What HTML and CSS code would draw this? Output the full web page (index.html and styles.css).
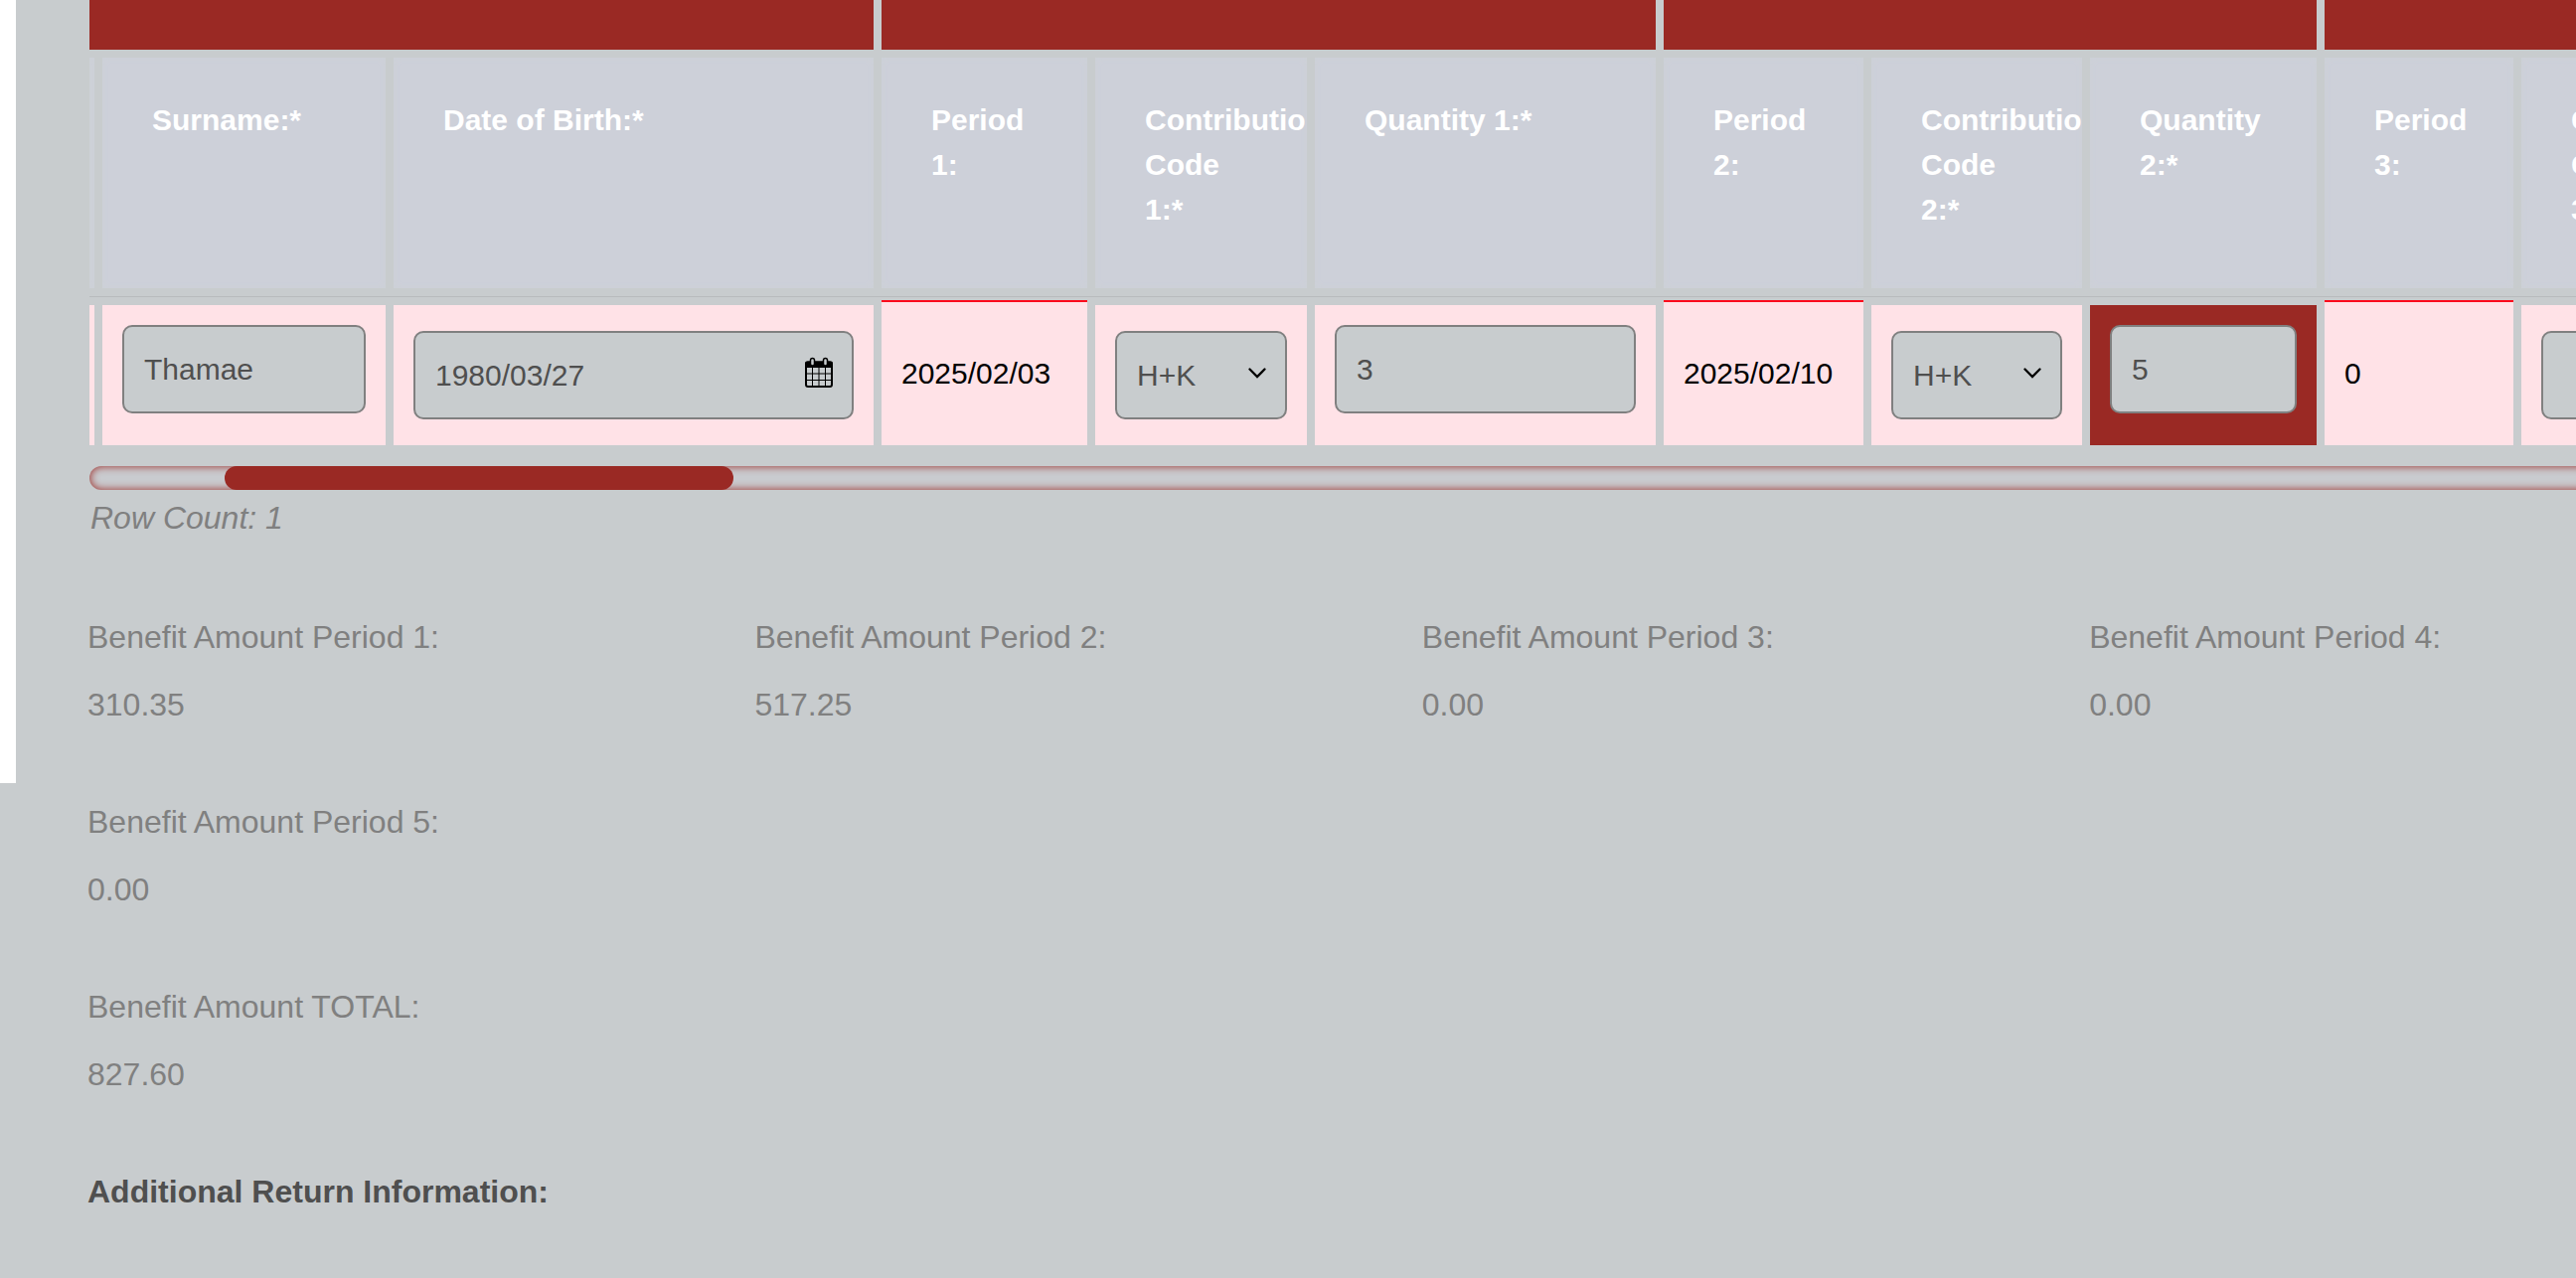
FILE: index.html
```html
<!DOCTYPE html>
<html lang="en">
<head>
<meta charset="utf-8">
<title>Return Details</title>
<link rel="stylesheet" href="styles.css">
</head>
<body>
<main class="page">
  <aside class="gutter"></aside>
  <div class="content">
    <section class="grid-scroll">
      <div class="groups">
        <div class="group"></div><div class="group"></div><div class="group"></div><div class="group"></div>
      </div>
      <div class="cols heads">
        <div class="head"></div>
        <div class="head">Surname:*</div>
        <div class="head">Date of Birth:*</div>
        <div class="head">Period<br>1:</div>
        <div class="head">Contribution<br>Code<br>1:*</div>
        <div class="head">Quantity 1:*</div>
        <div class="head">Period<br>2:</div>
        <div class="head">Contribution<br>Code<br>2:*</div>
        <div class="head">Quantity<br>2:*</div>
        <div class="head">Period<br>3:</div>
        <div class="head">Contribution<br>Code<br>3:*</div>
      </div>
      <div class="rule"></div>
      <div class="cols row">
        <div class="cell"></div>
        <div class="cell"><div class="field">Thamae</div></div>
        <div class="cell low"><div class="field">1980/03/27
          <svg class="calendar" viewBox="0 0 30 32">
            <rect x="2" y="5.5" width="26" height="24.5" rx="2" fill="none" stroke="#000" stroke-width="2"/>
            <path d="M1 11V6.500Q1 4.500 3 4.500H27Q29 4.500 29 6.500V11Z"/>
            <path d="M8.500 10V30M15 10V30M21.500 10V30M2 17H28M2 23.500H28" fill="none" stroke="#000" stroke-width="1"/>
            <rect x="6.500" y="1.500" width="4" height="7.500" rx="2" fill="#c8ccce" stroke="#000" stroke-width="1.500"/>
            <rect x="19.500" y="1.500" width="4" height="7.500" rx="2" fill="#c8ccce" stroke="#000" stroke-width="1.500"/>
          </svg></div></div>
        <div class="cell plain">2025/02/03</div>
        <div class="cell low"><div class="field">H+K<svg class="chevron" viewBox="0 0 18 12"><path d="M1.500 1.500L9 9L16.500 1.500"/></svg></div></div>
        <div class="cell"><div class="field">3</div></div>
        <div class="cell plain">2025/02/10</div>
        <div class="cell low"><div class="field">H+K<svg class="chevron" viewBox="0 0 18 12"><path d="M1.500 1.500L9 9L16.500 1.500"/></svg></div></div>
        <div class="cell alert"><div class="field">5</div></div>
        <div class="cell plain">0</div>
        <div class="cell low"><div class="field"></div></div>
      </div>
      <div class="track"><div class="thumb"></div></div>
    </section>
    <p class="count">Row Count: 1</p>
    <dl class="totals">
      <div><dt>Benefit Amount Period 1:</dt><dd>310.35</dd></div>
      <div><dt>Benefit Amount Period 2:</dt><dd>517.25</dd></div>
      <div><dt>Benefit Amount Period 3:</dt><dd>0.00</dd></div>
      <div><dt>Benefit Amount Period 4:</dt><dd>0.00</dd></div>
      <div class="first"><dt>Benefit Amount Period 5:</dt><dd>0.00</dd></div>
      <div class="first"><dt>Benefit Amount TOTAL:</dt><dd>827.60</dd></div>
    </dl>
    <h2 class="more">Additional Return Information:</h2>
  </div>
</main>
</body>
</html>
```

FILE: styles.css
```css
* { box-sizing: border-box; }
body {
  margin: 0;
  height: 1286px;
  overflow: hidden;
  background: #c8ccce;
  color: #808080;
  font: 32px/48px "Liberation Sans", Arial, sans-serif;
}
.page { display: flex; }
.gutter { flex: none; width: 16px; height: 788px; background: #fff; }
.content { flex: 1; min-width: 0; padding-left: 72px; overflow: hidden; }

/* Horizontally scrolled member grid */
.grid-scroll { margin-left: 2px; overflow: hidden; font-size: 30px; line-height: 45px; }
.groups {
  display: grid;
  grid-template-columns: 789px 779px 657px 1fr;
  column-gap: 8px;
  height: 50px;
}
.group { background: #9a2924; }
.cols {
  display: grid;
  grid-template-columns: 5px 285px 483px 207px 213px 343px 201px 212px 228px 190px 212px;
  column-gap: 8px;
}
.heads { margin-top: 8px; height: 232px; }
.head {
  overflow: hidden;
  padding: 40px 0 0 50px;
  background: #cdd0d9;
  box-shadow: inset 0 0 6px #cdd1d6;
  color: #fff;
  font-weight: bold;
  white-space: nowrap;
}
.head:first-child { padding: 0; }
.rule { height: 1px; margin-top: 8px; background: #b8bbbd; }
.row { margin-top: 3px; height: 146px; }
.cell { margin-top: 5px; padding: 20px; background: #ffe2e7; }
.cell:first-child { padding: 0; }
.low { padding-top: 26px; }
.alert { background: #9a2924; }
.plain {
  margin-top: 0;
  padding-top: 49px;
  border-top: 2px solid #fb0a1c;
  color: #000;
}
.field {
  display: flex;
  align-items: center;
  justify-content: space-between;
  height: 89px;
  padding: 0 18px 0 20px;
  border: 2px solid #808080;
  border-radius: 10px;
  background: #c8ccce;
  color: #4f4f4f;
}
.calendar { width: 30px; height: 32px; margin: -6px 0 0 0; }
.chevron { width: 18px; height: 12px; margin: -3px 1px 0 0; fill: none; stroke: #000; stroke-width: 2.3; stroke-linecap: round; }

.track {
  height: 24px;
  margin-top: 21px;
  border-radius: 12px 0 0 12px;
  background: #c9cbcf;
  box-shadow: inset 0 0 9px #9a2924;
  clip-path: inset(0 0 0 0);
  margin-right: -20px;
}
.thumb { width: 512px; height: 24px; margin-left: 136px; border-radius: 12px; background: #9a2924; }

.count { margin: 4px 0 0 3px; font-style: italic; }
.totals {
  display: grid;
  grid-template-columns: repeat(4, 671.4px);
  row-gap: 70px;
  margin: 72px 0 0;
}
.totals .first { grid-column: 1; }
dt { height: 48px; }
dd { height: 48px; margin: 20px 0 0; }
.more { margin: 70px 0 0; color: #4f4f4f; font-size: 32px; line-height: 48px; }
```
